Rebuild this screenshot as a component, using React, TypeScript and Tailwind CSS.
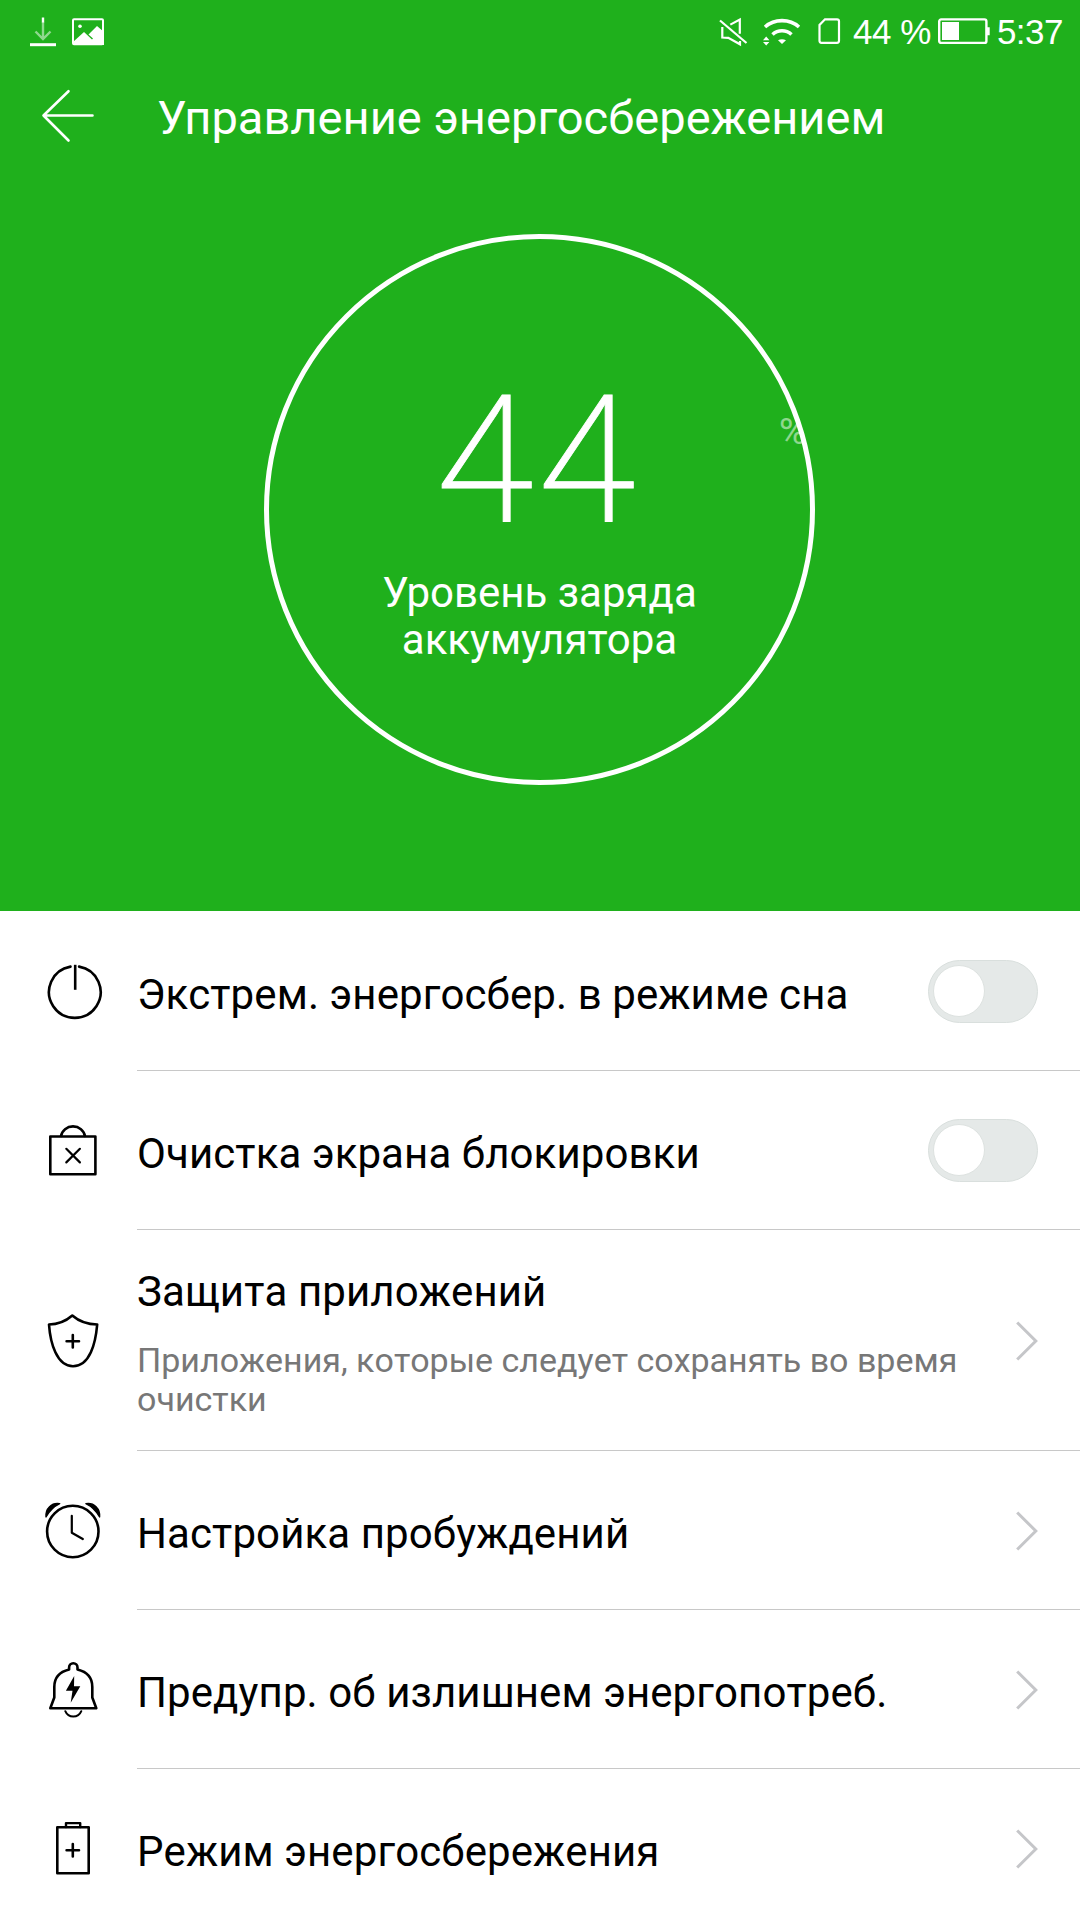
import { useState, type ReactNode } from "react";

function Icon({ children }: { children: ReactNode }) {
  return (
    <svg
      viewBox="0 0 60 60"
      className="h-[60px] w-[60px] shrink-0"
      fill="none"
      stroke="#000"
      strokeWidth="2.6"
      strokeLinecap="round"
      strokeLinejoin="round"
    >
      {children}
    </svg>
  );
}

const icons = {
  power: (
    <Icon>
      <path d="M27.5 4.6a25.8 25.8 0 1 0 8.6 0" />
      <path d="M32.2 2.8v25" strokeWidth="2.6" strokeLinecap="butt" />
    </Icon>
  ),
  lock: (
    <Icon>
      <path d="M7.3 15.5h45.1v37.8H7.3z" />
      <path d="M18.1 15a12 11 0 0 1 23.8 0" />
      <path d="M23.3 27.8l13.6 13.6M36.9 27.8L23.3 41.4" strokeWidth="2.2" />
    </Icon>
  ),
  shield: (
    <Icon>
      <path d="M29.3 4.6C35.5 10 44 13.5 54.2 13.5 52.6 32 47 55.2 30 55.2 13.700 55.2 7.300 32 6 13.500c10 0 17.100-3.500 23.300-8.900z" />
      <path d="M29.800 24v12.400M23.600 30.200H36" strokeWidth="2.600" />
    </Icon>
  ),
  alarm: (
    <Icon>
      <circle cx="29.800" cy="30.500" r="25.700" />
      <path d="M28.800 14.800v16.900l11 6.300" strokeWidth="2.200" />
      <path
        d="M3 16C2.200 7.500 8.700 1.300 16.700 2.700 11.200 5.300 6.500 9.900 3 16zM56.600 16C57.400 7.500 50.900 1.300 42.900 2.700c5.500 2.600 10.200 7.200 13.700 13.300z"
        fill="#000"
        strokeWidth="1.400"
      />
    </Icon>
  ),
  bell: (
    <Icon>
      <path d="M26.100 9.600V7.500a4.200 4.200 0 0 1 8.400 0v2.100C44.300 12 49.300 18 49.300 27v10.500L53.300 48.300H7.300l4-10.800V27c0-9 5-15 14.800-17.400z" />
      <path d="M22.300 51.200c3 7.200 13 7.200 16 0" strokeWidth="2" />
      <path d="M31.200 16l-8.300 14.700h6.600l-1.800 12 9.600-16.500H31z" fill="#000" stroke="none" />
    </Icon>
  ),
  battery: (
    <Icon>
      <path d="M14.300 8.300h31.400v45.900H14.300z" />
      <path d="M23 8V4.100h14.200V8" strokeWidth="2.400" />
      <path d="M29.800 25v12.400M23.600 31.200H36" strokeWidth="2.600" />
    </Icon>
  ),
};

type Row = {
  id: string;
  icon: ReactNode;
  title: string;
  description?: string;
  toggle?: boolean;
};

const ROWS: Row[] = [
  { id: "sleep", icon: icons.power, title: "Экстрем. энергосбер. в режиме сна", toggle: true },
  { id: "clean", icon: icons.lock, title: "Очистка экрана блокировки", toggle: true },
  {
    id: "protect",
    icon: icons.shield,
    title: "Защита приложений",
    description: "Приложения, которые следует сохранять во время очистки",
  },
  { id: "wakeup", icon: icons.alarm, title: "Настройка пробуждений" },
  { id: "alerts", icon: icons.bell, title: "Предупр. об излишнем энергопотреб." },
  { id: "mode", icon: icons.battery, title: "Режим энергосбережения" },
];

function Toggle({ label }: { label: string }) {
  const [on, setOn] = useState(false);
  return (
    <button
      type="button"
      role="switch"
      aria-checked={on}
      aria-label={label}
      onClick={() => setOn(!on)}
      className={`flex h-[63px] w-[110px] items-center rounded-full border px-1 ${
        on ? "justify-end border-[#1fb01c] bg-[#1fb01c]" : "border-[#d9dfdd] bg-[#e5e9e8]"
      }`}
    >
      <span className="h-[52px] w-[52px] rounded-full border border-[#dde2e0] bg-white" />
    </button>
  );
}

function Chevron() {
  return (
    <svg viewBox="0 0 24 42" className="mt-px h-[42px] w-6" fill="none" stroke="#c5c6c9" strokeWidth="3">
      <path d="M3.200 2.500L21.800 21 3.200 39.500" />
    </svg>
  );
}

function StatusBar() {
  return (
    <div className="flex h-16 items-center justify-between pr-[17px] pl-[30px]">
      <svg viewBox="0 0 76 32" className="h-8 w-[76px]" fill="none" stroke="#fff">
        <path d="M13 6v17M5.500 15.500L13 23l7.500-7.500" strokeWidth="2.400" opacity="0.500" />
        <path d="M13 1.500v5" strokeWidth="2.400" />
        <path d="M0 28.700h26" strokeWidth="3" />
        <rect x="43" y="3.300" width="30" height="25" rx="1" strokeWidth="2" />
        <circle cx="50" cy="10.300" r="1.800" fill="#fff" stroke="none" />
        <path d="M43 26l11-10 8 7.500 1-1-4.500-4L67 10l7 6v13H43z" fill="#fff" stroke="none" />
      </svg>
      <div className="flex items-center font-['Liberation_Sans',sans-serif] text-[35px] leading-none tracking-[-0.5px] text-white">
        <svg viewBox="0 0 126 32" className="mr-2 h-8 w-[126px]" fill="none" stroke="#fff" strokeWidth="2.200">
          <path d="M1 4.500L27.500 27" />
          <path d="M11.300 8.600L20.800 3.500v14.200M3.300 11v10.500l6 .3L21 28.300V25" />
          <path d="M46 11c9.500-8.500 24.500-8.500 34 0" strokeWidth="3.600" />
          <path d="M53.500 18.500c5.500-5 13.500-5 19 0" strokeWidth="3.600" />
          <path d="M59 24.200q4-2 8 0L63 28z" fill="#fff" stroke="none" />
          <path d="M44 24.200h6.400l-3.200-3.600zM44 26h6.400l-3.200 3.600z" fill="#fff" stroke="none" />
          <path d="M106 3.300h12q2 0 2 2v19.500q0 2-2 2h-15.500q-2 0-2-2V9z" />
        </svg>
        <span className="pb-0.5">44 %</span>
        <svg viewBox="0 0 53 28" className="mr-1.5 ml-[7px] h-7 w-[53px]" fill="none" stroke="#fff" strokeWidth="2.400">
          <rect x="1.200" y="1.400" width="47.200" height="23.500" rx="2" />
          <path d="M4 4h17v18H4zM49 9.300h2.700v8H49z" fill="#fff" stroke="none" />
        </svg>
        <span className="pb-0.5">5:37</span>
      </div>
    </div>
  );
}

export default function App() {
  return (
    <div className="h-[1920px] w-[1080px] overflow-hidden bg-white font-[Roboto,sans-serif]">
      <header className="h-[911px] bg-[#1fb01c] text-white">
        <StatusBar />
        <div className="flex h-[104px] items-center gap-[63px] pl-10">
          <button type="button" aria-label="Назад">
            <svg viewBox="0 0 54 54" className="h-[54px] w-[54px]" fill="none" stroke="#fff" strokeWidth="2.600" strokeLinecap="round" strokeLinejoin="round">
              <path d="M28.500 2.200L3.500 26.500 28.500 51.500M3.500 26.500h49" />
            </svg>
          </button>
          <h1 className="mt-0.5 text-[47px] leading-none tracking-[0.04px]">Управление энергосбережением</h1>
        </div>
        <div className="relative mt-[66px] ml-[264px] flex h-[551px] w-[551px] flex-col items-center rounded-full border-[5px]">
          <div className="mt-[132px] pr-1 text-[179px] leading-[180px] font-extralight tracking-[3.5px] [-webkit-text-stroke:0.8px_white]">
            44
          </div>
          <p className="mt-[18px] w-[399px] text-center text-[42px] leading-[47px]">
            Уровень заряда аккумулятора
          </p>
          <span className="absolute top-[165px] left-[510px] text-[37px] opacity-50">%</span>
        </div>
      </header>
      <ul className="pt-px [font-kerning:none]">
        {ROWS.map((row) => (
          <li key={row.id} className="flex pl-[43px]">
            <div className="flex w-[94px] items-center">{row.icon}</div>
            <div
              className={`flex flex-1 items-center justify-between border-b border-[#c8c8c8] pr-[42px] ${
                row.description ? "h-[221px]" : "h-[159px]"
              }`}
            >
              <div className={row.description ? "pt-[6px]" : "pt-2"}>
                <h2 className="text-[42px] leading-[50px] tracking-[0.1px]">{row.title}</h2>
                {row.description && (
                  <p className="mt-6 w-[840px] text-[34px] leading-[39px] text-[#777]">{row.description}</p>
                )}
              </div>
              {row.toggle ? <Toggle label={row.title} /> : <Chevron />}
            </div>
          </li>
        ))}
      </ul>
    </div>
  );
}
